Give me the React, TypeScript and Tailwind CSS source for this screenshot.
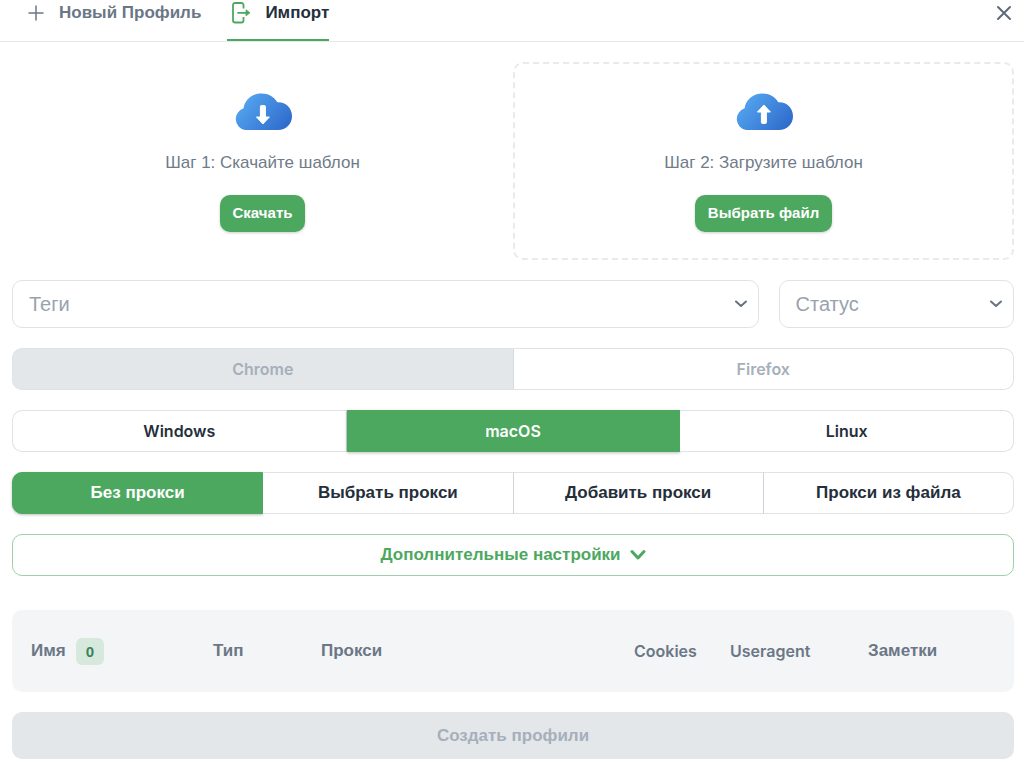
import { useState } from 'react';
import type { ReactNode } from 'react';
import clsx from 'clsx';

interface Option {
  id: string;
  label: string;
  latin?: boolean;
}

const systems: Option[] = [
  { id: 'windows', label: 'Windows', latin: true },
  { id: 'macos', label: 'macOS', latin: true },
  { id: 'linux', label: 'Linux', latin: true },
];

const proxyModes: Option[] = [
  { id: 'none', label: 'Без прокси' },
  { id: 'select', label: 'Выбрать прокси' },
  { id: 'add', label: 'Добавить прокси' },
  { id: 'file', label: 'Прокси из файла' },
];

function ImportIcon() {
  return (
    <svg width="20" height="26" viewBox="0 0 20 26" fill="none" stroke="#4da85f" strokeWidth="1.800" aria-hidden="true">
      <path d="M12.500 8.500V5a2 2 0 0 0-2-2H4a2 2 0 0 0-2 2v15.500a2 2 0 0 0 2 2h6.500a2 2 0 0 0 2-2V17" />
      <path d="M7 12.800H16" strokeLinecap="round" />
      <path d="M15 9.800l4 3-4 3z" fill="#4da85f" strokeWidth="0.800" strokeLinejoin="round" />
    </svg>
  );
}

function CloudIcon({ id, up = false }: { id: string; up?: boolean }) {
  return (
    <svg width="58" height="38" viewBox="0 0 58 38" aria-hidden="true">
      <defs>
        <linearGradient id={id} x1="8" y1="2" x2="50" y2="38" gradientUnits="userSpaceOnUse">
          <stop stopColor="#56a8f2" />
          <stop offset="1" stopColor="#2f6bcb" />
        </linearGradient>
      </defs>
      <path
        d="M11 37A11.200 11.200 0 0 1 9.600 15.300C10.600 6.800 18 0.500 27.500 0.500c6.800 0 12.400 3.300 15.800 8.800C51.500 8.700 58 15 58 23.200 58 31 52 37 44 37z"
        fill={`url(#${id})`}
      />
      {up ? (
        <path d="M28.900 12l6.500 7h-4v10.500a1 1 0 0 1-1 1h-3a1 1 0 0 1-1-1V19h-4z" fill="#fff" stroke="#fff" strokeWidth="1" strokeLinejoin="round" />
      ) : (
        <path d="M28.900 31l6.500-7h-4V13.500a1 1 0 0 0-1-1h-3a1 1 0 0 0-1 1V24h-4z" fill="#fff" stroke="#fff" strokeWidth="1" strokeLinejoin="round" />
      )}
    </svg>
  );
}

function Chevron({ className }: { className?: string }) {
  return (
    <svg width="14" height="8" viewBox="0 0 14 8" fill="none" stroke="currentColor" strokeWidth="2" strokeLinecap="round" strokeLinejoin="round" className={className} aria-hidden="true">
      <path d="M2 1.500l5 4.500 5-4.500" />
    </svg>
  );
}

function SelectBox({ label, className }: { label: string; className?: string }) {
  return (
    <div className={clsx('relative', className)}>
      <select
        aria-label={label}
        defaultValue=""
        className="h-12 w-full appearance-none rounded-[10px] border border-[#dfe2e6] bg-white px-4 text-xl text-[#98a2ae] focus:outline-none"
      >
        <option value="">{label}</option>
      </select>
      <Chevron className="pointer-events-none absolute right-[11px] top-5 text-[#667382]" />
    </div>
  );
}

interface SegmentedProps {
  options: Option[];
  value: string;
  onChange: (id: string) => void;
}

function Segmented({ options, value, onChange }: SegmentedProps) {
  return (
    <div className="flex">
      {options.map((option) => (
        <button
          key={option.id}
          type="button"
          aria-pressed={option.id === value}
          onClick={() => onChange(option.id)}
          className={clsx(
            'h-[42px] flex-1 border-y border-r first:rounded-l-[10px] first:border-l last:rounded-r-[10px]',
            option.latin ? 'font-[Inter,sans-serif] text-base font-semibold' : 'text-[17px] font-bold',
            option.id === value
              ? 'border-[#4da85f] bg-[#4da85f] text-white shadow-[0_1px_3px_rgba(0,0,0,0.25)]'
              : 'border-[#dfe2e6] bg-white text-[#252f3b] not-last:border-r-[#cdd3da]'
          )}
        >
          {option.label}
        </button>
      ))}
    </div>
  );
}

function Step({ icon, text, action, dashed = false }: { icon: ReactNode; text: string; action: string; dashed?: boolean }) {
  return (
    <div
      className={clsx(
        'flex flex-1 flex-col items-center rounded-[10px] border-2 pt-[29px] pb-[26px]',
        dashed ? 'border-dashed border-[#e8eaec]' : 'border-transparent'
      )}
    >
      {icon}
      <p className="mt-5 text-[17px] leading-6 text-[#6f7b88]">{text}</p>
      <button
        type="button"
        className="mt-5 h-[37px] rounded-[10px] bg-[#4da85f] px-[13px] text-[15px] font-bold text-white shadow-[0_1px_3px_rgba(0,0,0,0.2)]"
      >
        {action}
      </button>
    </div>
  );
}

export default function App() {
  const [system, setSystem] = useState('macos');
  const [proxy, setProxy] = useState('none');

  return (
    <div className="min-h-screen bg-white font-['Liberation_Sans',Arial,sans-serif] text-[#252f3b]">
      <header className="flex items-start justify-between border-b border-[#e6e8ea] pl-7 pr-3">
        <nav className="flex gap-[26px]">
          <button type="button" className="flex h-[41px] items-start gap-[15px] text-[17px] leading-[26px] font-bold text-[#6b7786]">
            <svg width="16" height="26" viewBox="0 0 16 26" stroke="currentColor" strokeWidth="1.500" strokeLinecap="round" aria-hidden="true">
              <path d="M8 6v14M1 13h14" />
            </svg>
            Новый Профиль
          </button>
          <button type="button" className="flex h-[41px] items-start gap-[14px] border-b-2 border-[#4da85f] pl-1 text-[17px] leading-[26px] font-bold">
            <ImportIcon />
            Импорт
          </button>
        </nav>
        <button type="button" aria-label="Закрыть" className="text-[#5f6b7a]">
          <svg width="16" height="26" viewBox="0 0 16 26" stroke="currentColor" strokeWidth="2" strokeLinecap="round" aria-hidden="true">
            <path d="M2 7l12 12M14 7L2 19" />
          </svg>
        </button>
      </header>

      <main className="flex flex-col gap-5 pt-5 pr-[10px] pb-2 pl-3">
        <section className="flex">
          <Step icon={<CloudIcon id="cloud-down" />} text="Шаг 1: Скачайте шаблон" action="Скачать" />
          <Step icon={<CloudIcon id="cloud-up" up />} text="Шаг 2: Загрузите шаблон" action="Выбрать файл" dashed />
        </section>

        <div className="grid grid-cols-4 gap-5">
          <SelectBox label="Теги" className="col-span-3" />
          <SelectBox label="Статус" />
        </div>

        <div className="flex font-[Inter,sans-serif] text-base font-semibold text-[#a6afba]">
          <button type="button" disabled className="h-[42px] flex-1 rounded-l-[10px] border border-[#dfe2e6] border-r-[#d5dae0] bg-[#e3e7ea]">
            Chrome
          </button>
          <button type="button" disabled className="h-[42px] flex-1 rounded-r-[10px] border border-l-0 border-[#dfe2e6]">
            Firefox
          </button>
        </div>

        <Segmented options={systems} value={system} onChange={setSystem} />
        <Segmented options={proxyModes} value={proxy} onChange={setProxy} />

        <button
          type="button"
          className="flex h-[42px] items-center justify-center gap-[9px] rounded-[10px] border border-[#9fd0aa] text-[17px] font-bold text-[#4da85f]"
        >
          Дополнительные настройки
          <svg width="16" height="12" viewBox="0 0 16 12" fill="none" stroke="currentColor" strokeWidth="3" strokeLinecap="round" strokeLinejoin="round" aria-hidden="true">
            <path d="M2 2.500l6 6.500 6-6.500" />
          </svg>
        </button>

        <div className="mt-[14px] overflow-hidden rounded-[10px] bg-[#f3f5f7]">
          <table className="h-[82px] w-full table-fixed text-left text-[17px] text-[#6b7786]">
            <thead>
              <tr>
                <th className="w-[182px] px-[19px] font-bold">
                  <span className="flex items-center gap-[10px]">
                    Имя
                    <span className="rounded-md bg-[#d7e9dd] px-[10px] text-[15px] leading-[27px] text-[#37845a]">0</span>
                  </span>
                </th>
                <th className="w-[108px] px-[19px] font-bold">Тип</th>
                <th className="px-[19px] font-bold">Прокси</th>
                <th className="w-[96px] pl-[19px] font-[Inter,sans-serif] text-base font-semibold">Cookies</th>
                <th className="w-[138px] pl-[19px] font-[Inter,sans-serif] text-base font-semibold">Useragent</th>
                <th className="w-[165px] px-[19px] font-bold">Заметки</th>
              </tr>
            </thead>
          </table>
        </div>

        <button type="button" disabled className="h-[47px] rounded-[10px] bg-[#e3e7ea] text-[17px] font-bold text-[#a6afba]">
          Создать профили
        </button>
      </main>
    </div>
  );
}
